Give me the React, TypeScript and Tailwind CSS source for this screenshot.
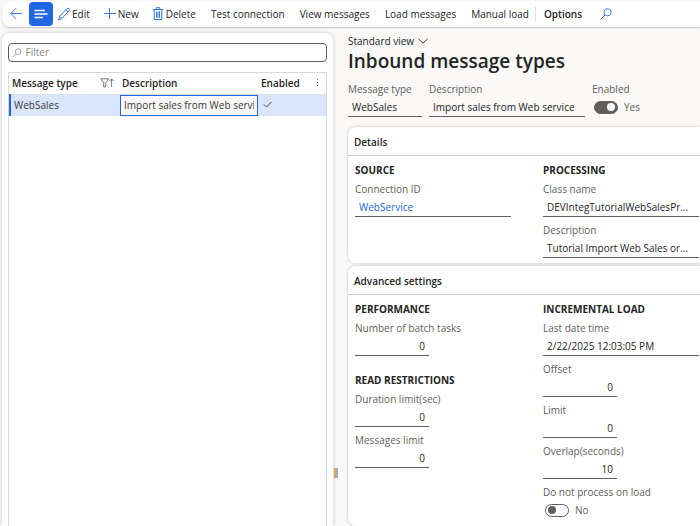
import React from "react";

interface FieldProps {
  id: string;
  label: string;
  value: string;
  size?: "small" | "full";
  numeric?: boolean;
}

interface ToggleProps {
  id: string;
  label: string;
  checked?: boolean;
}

const actions: string[] = ["Test connection", "View messages", "Load messages", "Manual load"];

const BackIcon = () => (
  <svg className="w-3 h-3" viewBox="0 0 12 12" fill="none" stroke="#3b7de0">
    <path d="M12 5.5H0.8M6 0.3L0.8 5.5L6 10.7" />
  </svg>
);

const ListIcon = () => (
  <svg className="w-3.5 h-3" viewBox="0 0 14 12" fill="none" stroke="#fff" strokeWidth="1.4">
    <path d="M0.5 2.5H11M0.5 6H13.5M0.5 9.5H9" />
  </svg>
);

const PencilIcon = () => (
  <svg className="w-3 h-3.5" viewBox="0 0 12 14" fill="none" stroke="#2f74dd" strokeLinejoin="round">
    <path d="M0.6 13L1.6 9.3L9 1.6Q10 0.8 11 1.7Q11.9 2.7 11.1 3.7L3.9 11.5ZM7.9 2.8L10 4.9M1.6 9.3L3.9 11.5" />
  </svg>
);

const PlusIcon = () => (
  <svg className="w-3 h-3" viewBox="0 0 12 12" fill="none" stroke="#3b7de0">
    <path d="M5.5 0V11M0 5.5H12" />
  </svg>
);

const TrashIcon = () => (
  <svg className="w-2.5 h-3.5" viewBox="0 0 10 14" fill="none" stroke="#2f74dd">
    <path d="M0 2.5H10M3.2 2.5V0.7H6.8V2.5M1.2 2.5V12.5H8.8V2.5M3.4 4.5V10.8M5 4.5V10.8M6.6 4.5V10.8" />
  </svg>
);

const SearchIcon = ({ className }: { className: string }) => (
  <svg className={className} viewBox="0 0 12 12" fill="none" stroke="currentColor">
    <circle cx="7.6" cy="4.3" r="3.6" />
    <path d="M5.1 6.9L0.5 11.5" />
  </svg>
);

const FilterSortIcon = () => (
  <svg className="w-3.5 h-2.5" viewBox="0 0 14 10" fill="none" stroke="#666" strokeWidth="0.9">
    <path d="M0.6 0.8H8.8L5.7 4.6V8.8H3.7V4.6ZM11.6 9V1M9.6 3L11.6 0.9L13.6 3" />
  </svg>
);

const Field: React.FC<FieldProps> = ({ id, label, value, size = "full", numeric }) => (
  <div className={size === "small" ? "w-[74px]" : "w-full"}>
    <label htmlFor={id} className="block h-4 leading-4 text-[#605e5c] whitespace-nowrap">
      {label}
    </label>
    <input
      id={id}
      defaultValue={value}
      className={`block w-full h-5 px-1 border-b border-[#605e5c] text-[#242424] text-ellipsis outline-none ${
        numeric ? "text-right" : ""
      }`}
    />
  </div>
);

const Toggle: React.FC<ToggleProps> = ({ id, label, checked = false }) => (
  <div>
    <label htmlFor={id} className="block h-4 leading-4 text-[#605e5c] whitespace-nowrap">
      {label}
    </label>
    <div className="flex items-center gap-1.5 h-5 pl-0.5">
      <input
        id={id}
        type="checkbox"
        role="switch"
        defaultChecked={checked}
        className="appearance-none flex items-center justify-start checked:justify-end w-6 h-[13px] px-0.5 rounded-full border border-[#605e5c] bg-white checked:bg-[#605e5c] before:block before:w-2 before:h-2 before:rounded-full before:bg-[#605e5c] checked:before:bg-white"
      />
      <span className="text-[#605e5c]">{checked ? "Yes" : "No"}</span>
    </div>
  </div>
);

const Card: React.FC<{ title: string; className?: string; children: React.ReactNode }> = ({
  title,
  className = "",
  children,
}) => (
  <section className={`bg-white rounded-l-lg shadow-[0_0_3px_rgba(0,0,0,0.25)] ${className}`}>
    <h2 className="h-[29px] pl-1.5 pt-px leading-[29px] font-semibold border-b border-[#cfcfcf]">{title}</h2>
    <div className="grid grid-cols-2 gap-x-8 pl-[7px] pr-px pt-1.5">{children}</div>
  </section>
);

const GroupTitle: React.FC<{ children: React.ReactNode }> = ({ children }) => (
  <h3 className="h-4 mb-[3px] leading-4 font-bold whitespace-nowrap">{children}</h3>
);

const Toolbar = () => (
  <header className="flex items-center h-[26px] ml-0.5 pl-2 bg-white rounded-l-lg shadow-[0_1px_2px_rgba(0,0,0,0.2)] whitespace-nowrap">
    <button aria-label="Back" className="mr-[7px]">
      <BackIcon />
    </button>
    <button aria-label="Show list" className="flex items-center justify-center w-6 h-6 mr-[5px] rounded bg-[#2266e3]">
      <ListIcon />
    </button>
    <button className="flex items-center gap-0.5 mr-3.5">
      <PencilIcon />
      Edit
    </button>
    <button className="flex items-center gap-0.5 mr-3.5">
      <PlusIcon />
      New
    </button>
    <button className="flex items-center gap-[3px]">
      <TrashIcon />
      Delete
    </button>
    {actions.map((action) => (
      <button key={action} className="ml-[15px]">
        {action}
      </button>
    ))}
    <span className="w-px h-4 mx-1.5 bg-[#e1dfdd]" />
    <button className="px-0.5 font-semibold">Options</button>
    <button aria-label="Search" className="ml-4 text-[#3b7de0]">
      <SearchIcon className="w-3 h-3" />
    </button>
  </header>
);

const MessageList = () => (
  <aside className="flex flex-col w-[331px] shrink-0 px-1.5 pt-2.5 bg-white rounded-t-lg shadow-[0_0_4px_rgba(0,0,0,0.2)]">
    <label className="flex items-center gap-1 h-[19px] px-[3px] mb-2.5 rounded border border-[#605e5c] text-[#8a8886]">
      <SearchIcon className="w-2.5 h-2.5" />
      <input aria-label="Filter" placeholder="Filter" className="w-full outline-none placeholder:text-[#8a8886]" />
    </label>
    <div className="flex-1 border border-b-0 border-[#d9d9d9]">
      <table className="w-full table-fixed border-collapse">
        <thead>
          <tr className="h-[21px] text-left border-b border-[#e1dfdd]">
            <th className="w-[110px] pl-0.5 font-semibold">
              <div className="flex items-center justify-between pr-1.5">
                Message type
                <FilterSortIcon />
              </div>
            </th>
            <th className="w-[138px] pl-0.5 font-semibold">Description</th>
            <th className="pl-[3px] font-semibold">
              <div className="flex items-center justify-between pr-[7px]">
                Enabled
                <button aria-label="Column options">
                  <svg className="w-0.5 h-2" viewBox="0 0 2 8" fill="#777">
                    <path d="M0 0H1V1H0ZM0 3H1V4H0ZM0 6H1V7H0Z" />
                  </svg>
                </button>
              </div>
            </th>
          </tr>
        </thead>
        <tbody>
          <tr className="h-[21px] bg-[#d9e5fc] text-[#3b3a39]">
            <td className="pl-[3px] border-l-2 border-[#2266e3]">WebSales</td>
            <td className="p-0">
              <input
                aria-label="Description"
                defaultValue="Import sales from Web service"
                className="block w-full h-[21px] px-[3px] border border-[#2266e3] bg-[#faf9f8] outline-none"
              />
            </td>
            <td className="pl-[5px]">
              <svg className="w-2.5 h-2" viewBox="0 0 10 8" fill="none" stroke="#444" aria-label="Yes">
                <path d="M1 3.5L3.5 6L8.5 1" />
              </svg>
            </td>
          </tr>
        </tbody>
      </table>
    </div>
  </aside>
);

const App: React.FC = () => {
  return (
    <div className="flex flex-col min-h-screen pt-px bg-[#faf9f8] text-[#242424] text-[10px] font-['Open_Sans','Noto_Sans',sans-serif] overflow-hidden">
      <Toolbar />
      <div className="flex flex-1 pl-0.5 pt-1.5">
        <MessageList />
        <div role="separator" className="flex items-end w-[15px] shrink-0 pl-px pb-12">
          <span className="w-1 h-2.5 bg-[#b5aaa0] border-l-2 border-[#dba56f]" />
        </div>
        <main className="flex-1 min-w-0">
          <button className="flex items-center gap-1 h-4">
            Standard view
            <svg className="w-2.5 h-1.5" viewBox="0 0 10 6" fill="none" stroke="#333">
              <path d="M0.5 0.8L5 5.2L9.5 0.8" />
            </svg>
          </button>
          <h1 className="h-6 leading-6 text-[19px] font-semibold whitespace-nowrap">Inbound message types</h1>
          <div className="flex gap-[7px] mt-2 mb-2.5">
            <Field id="message-type" label="Message type" value="WebSales" size="small" />
            <div className="w-[156px]">
              <Field id="description" label="Description" value="Import sales from Web service" />
            </div>
            <Toggle id="enabled" label="Enabled" checked />
          </div>

          <Card title="Details" className="pb-[5px] mb-[3px]">
            <div>
              <GroupTitle>SOURCE</GroupTitle>
              <span id="connection-label" className="block h-4 leading-4 text-[#605e5c]">
                Connection ID
              </span>
              <div className="h-5 px-1 leading-5 border-b border-[#605e5c]">
                <a href="#web-service" aria-labelledby="connection-label" className="text-[#2266e3]">
                  WebService
                </a>
              </div>
            </div>
            <div className="flex flex-col gap-[5px]">
              <div>
                <GroupTitle>PROCESSING</GroupTitle>
                <Field id="class-name" label="Class name" value="DEVIntegTutorialWebSalesPr..." />
              </div>
              <Field id="class-description" label="Description" value="Tutorial Import Web Sales or..." />
            </div>
          </Card>

          <Card title="Advanced settings" className="pb-1.5">
            <div className="flex flex-col">
              <GroupTitle>PERFORMANCE</GroupTitle>
              <Field id="batch-tasks" label="Number of batch tasks" value="0" size="small" numeric />
              <div className="flex flex-col mt-4">
                <GroupTitle>READ RESTRICTIONS</GroupTitle>
                <div className="flex flex-col gap-[5px]">
                  <Field id="duration-limit" label="Duration limit(sec)" value="0" size="small" numeric />
                  <Field id="messages-limit" label="Messages limit" value="0" size="small" numeric />
                </div>
              </div>
            </div>
            <div>
              <GroupTitle>INCREMENTAL LOAD</GroupTitle>
              <div className="flex flex-col gap-[5px]">
                <Field id="last-date" label="Last date time" value="2/22/2025 12:03:05 PM" />
                <Field id="offset" label="Offset" value="0" size="small" numeric />
                <Field id="limit" label="Limit" value="0" size="small" numeric />
                <Field id="overlap" label="Overlap(seconds)" value="10" size="small" numeric />
                <Toggle id="skip-load" label="Do not process on load" />
              </div>
            </div>
          </Card>
        </main>
      </div>
    </div>
  );
};

export default App;
